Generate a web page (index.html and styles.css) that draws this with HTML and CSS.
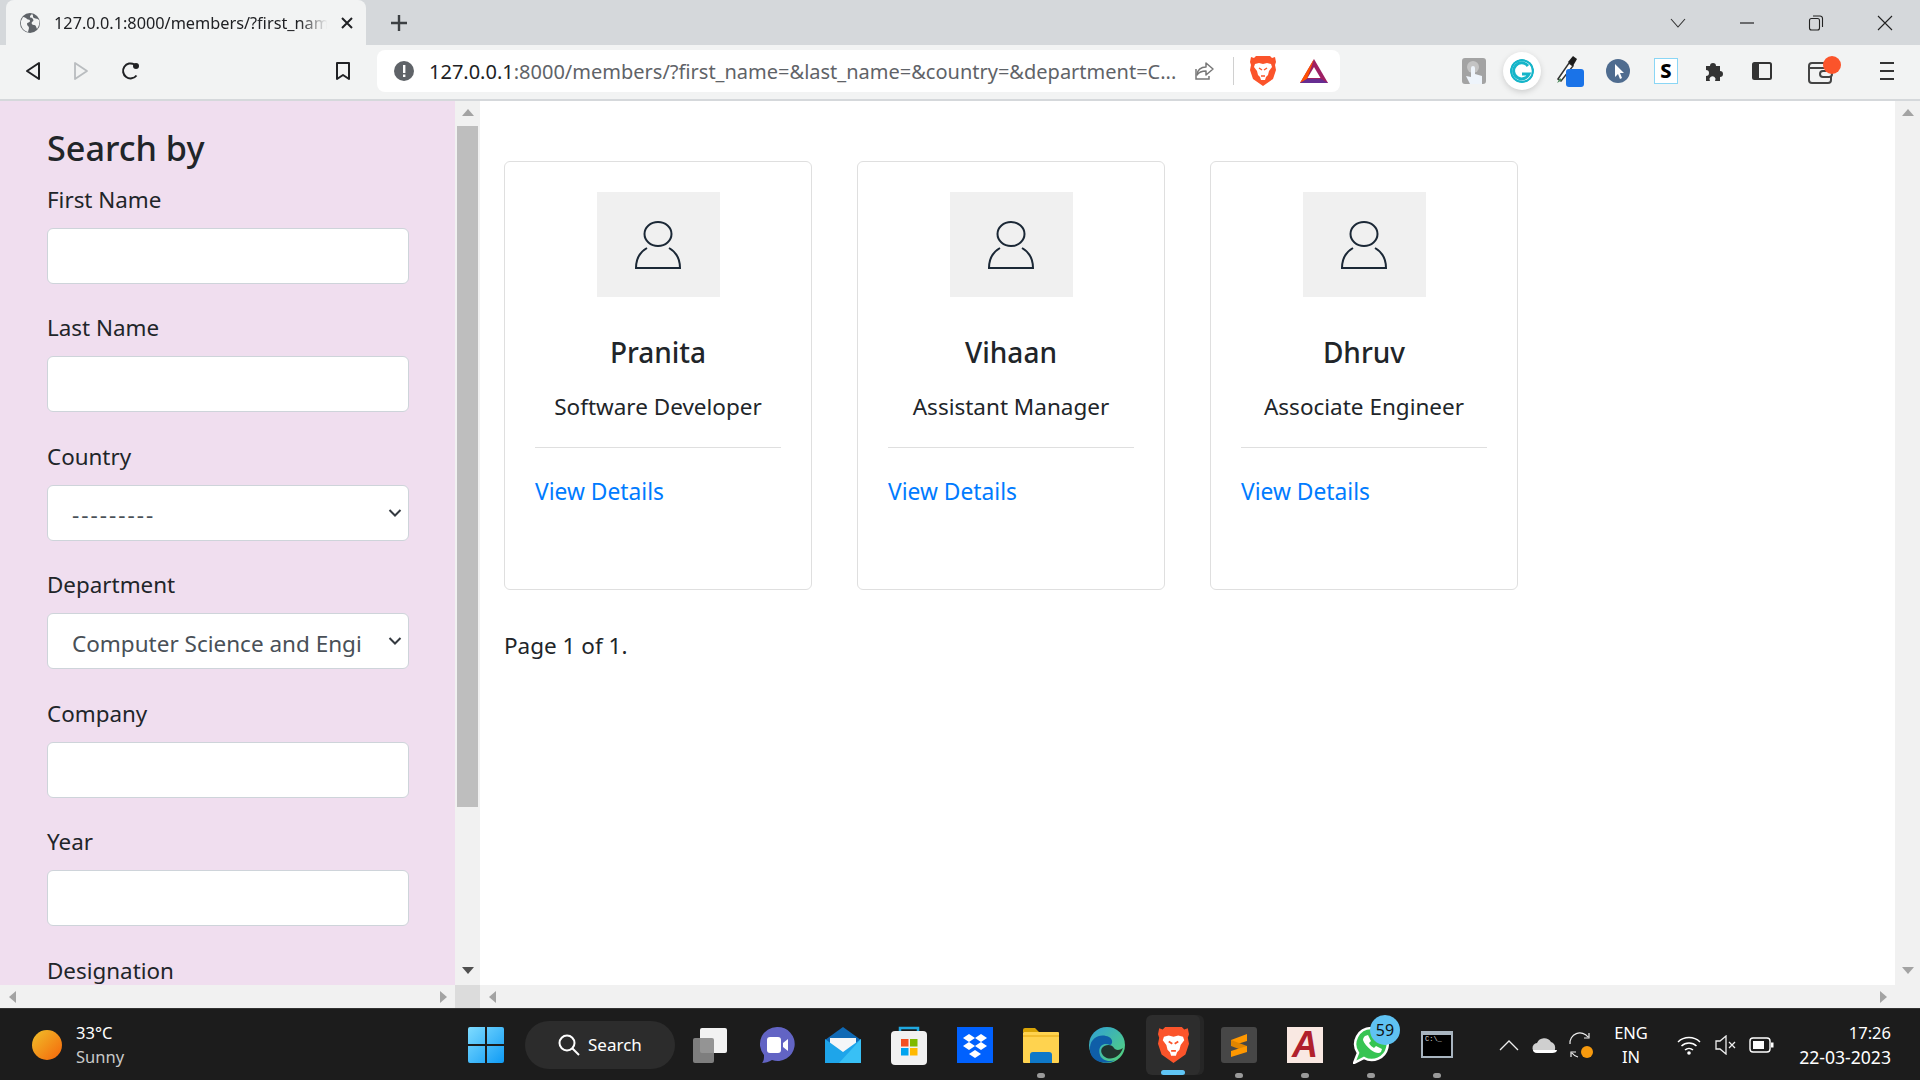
FILE: index.html
```html
<!DOCTYPE html>
<html lang="en">
<head>
    <meta charset="UTF-8">
    <title>Members</title>
    <link rel="stylesheet" href="styles.css">
</head>
<body>
<div class="screen">
    <!-- Tab strip -->
    <div class="tabstrip">
        <div class="tab">
            <svg class="tab-globe" width="22" height="22" viewBox="0 0 22 22"><circle cx="11" cy="11" r="10" fill="#5f6368"/><path d="M4 5c2 0 3 1 4 2s3 0 3 2-3 1-3 3 2 2 2 4l-1 4C5 19 1 15 2 9zM13 2c2 2 0 3 2 4s3 0 5 2c1 3 0 6-2 9-1-2-1-4-3-4s-3-2-2-3 2-1 1-3-3 0-3-3z" fill="#f2f3f3"/></svg>
            <span class="tab-title">127.0.0.1:8000/members/?first_nam</span>
            <svg class="tab-close" width="14" height="14" viewBox="0 0 14 14"><path d="M2 2l10 10M12 2L2 12" stroke="#202124" stroke-width="2"/></svg>
        </div>
        <svg class="new-tab" width="18" height="18" viewBox="0 0 18 18"><path d="M9 1v16M1 9h16" stroke="#3c4043" stroke-width="2.4"/></svg>
        <div class="window-btns">
            <svg width="16" height="16" viewBox="0 0 16 16"><path d="M1 4l7 8 7-8" fill="none" stroke="#333" stroke-width="1.1"/></svg>
            <svg width="16" height="16" viewBox="0 0 16 16"><path d="M1 8h14" stroke="#222" stroke-width="1.2"/></svg>
            <svg width="16" height="16" viewBox="0 0 16 16"><rect x="1.5" y="3.5" width="10" height="11.5" rx="2" fill="none" stroke="#222" stroke-width="1.1"/><path d="M5 1h7a2.500 2.500 0 0 1 2.500 2.500V12" fill="none" stroke="#222" stroke-width="1.1"/></svg>
            <svg width="16" height="16" viewBox="0 0 16 16"><path d="M1 1l14 14M15 1L1 15" stroke="#222" stroke-width="1.1"/></svg>
        </div>
    </div>

    <!-- Toolbar -->
    <div class="toolbar">
        <div class="nav-btns">
            <svg width="16" height="20" viewBox="0 0 16 20"><path d="M14 2v16L2 10z" fill="none" stroke="#202124" stroke-width="2" stroke-linejoin="round"/></svg>
            <svg width="16" height="20" viewBox="0 0 16 20"><path d="M2 2v16l12-8z" fill="none" stroke="#b9bcbf" stroke-width="1.800" stroke-linejoin="round"/></svg>
            <svg width="20" height="20" viewBox="0 0 20 20"><path d="M15.500 14.500A7.500 7.500 0 1 1 13.500 3.500" fill="none" stroke="#202124" stroke-width="2"/><circle cx="15" cy="5" r="3" fill="#202124"/></svg>
        </div>
        <svg class="bookmark" width="16" height="20" viewBox="0 0 16 20"><path d="M2 2h12v16l-6-4-6 4z" fill="none" stroke="#202124" stroke-width="2" stroke-linejoin="round"/></svg>
        <div class="omnibox">
            <svg width="20" height="20" viewBox="0 0 20 20"><circle cx="10" cy="10" r="10" fill="#5f6368"/><rect x="9" y="4" width="2.400" height="8" fill="#fff"/><rect x="9" y="13.500" width="2.400" height="2.500" fill="#fff"/></svg>
            <div class="url"><span class="url-host">127.0.0.1</span>:8000/members/?first_name=&amp;last_name=&amp;country=&amp;department=C...</div>
            <svg class="share" width="22" height="22" viewBox="0 0 22 22"><path d="M13 3l7 6-7 6v-4c-4 0-7 1-9 4 0-5 4-8 9-8z" fill="none" stroke="#777" stroke-width="1.500" stroke-linejoin="round"/><path d="M3 9v10h13v-3" fill="none" stroke="#777" stroke-width="1.500"/></svg>
            <div class="omni-sep"></div>
            <svg class="brave-small" width="26" height="30" viewBox="0 0 26 30"><use href="#brave"/></svg>
            <svg class="bat" width="28" height="24" viewBox="0 0 28 24"><path d="M14 0L0 24h28z" fill="#9e1f63"/><path d="M14 0L0 24l7-4z" fill="#ff5000"/><path d="M0 24h28l-7-4H7z" fill="#662d91"/><path d="M14 8l-6.500 11h13z" fill="#fff"/></svg>
        </div>
        <div class="extensions">
            <div class="ext ext-touch"><svg width="24" height="26" viewBox="0 0 24 26"><rect width="24" height="26" rx="3" fill="#a3a3a3"/><circle cx="11" cy="9" r="6" fill="#c4c4c4"/><path d="M9 10a2 2 0 0 1 4 0v6l7 2v8H8l-4-8 5 1z" fill="#eef4fb"/></svg></div>
            <div class="ext ext-g"><svg width="24" height="24" viewBox="0 0 24 24"><circle cx="12" cy="12" r="11" fill="none" stroke="#15b5c9" stroke-width="2.400"/><path d="M18 7a8 8 0 1 0 1 8h-7" fill="none" stroke="#15b5c9" stroke-width="3"/></svg></div>
            <div class="ext ext-drop"><svg width="30" height="34" viewBox="0 0 30 34"><path d="M3 25L14 9l4 3L6 27z" fill="#fff" stroke="#333" stroke-width="1.500"/><path d="M2 29l3-5 2 2z" fill="#4d8a5b"/><path d="M13 8l5-6 4 3-4 7z" fill="#1c1c1c"/><rect x="11" y="15" width="18" height="18" rx="3" fill="#1a73e8"/></svg></div>
            <div class="ext ext-cursor"><svg width="24" height="24" viewBox="0 0 24 24"><circle cx="12" cy="12" r="12" fill="#4f6c8f"/><path d="M9 5l9 9h-4l2 5-2 1-2-5-3 3z" fill="#fff"/></svg></div>
            <div class="ext ext-s"><span>S</span></div>
            <div class="ext"><svg width="22" height="22" viewBox="0 0 22 22"><path d="M3 6h4a3 3 0 1 1 6 0h4v5a3 3 0 1 1 0 6v4H12a3 3 0 1 0-5 0H3v-5a3 3 0 1 0 0-6z" fill="#333"/></svg></div>
            <div class="ext"><svg width="20" height="20" viewBox="0 0 20 20"><rect x="1" y="2" width="18" height="16" rx="1.500" fill="none" stroke="#333" stroke-width="2"/><rect x="1" y="2" width="6" height="16" fill="#333"/></svg></div>
            <div class="ext ext-wallet"><svg width="34" height="30" viewBox="0 0 34 30"><rect x="1" y="7" width="22" height="20" rx="3" fill="none" stroke="#444" stroke-width="2"/><path d="M1 12h22" stroke="#444" stroke-width="2"/><rect x="12" y="15" width="12" height="6" rx="3" fill="#f2f3f3" stroke="#444" stroke-width="2"/><circle cx="24" cy="9" r="9" fill="#fb542b"/></svg></div>
            <div class="ext ext-menu"><span></span><span></span><span></span></div>
        </div>
    </div>

    <div class="viewport">
        <!-- Search sidebar -->
        <aside class="side-frame">
            <div class="side-top">
                <div class="sidebar">
                    <h2>Search by</h2>
                    <div class="field"><label>First Name</label><input type="text"></div>
                    <div class="field"><label>Last Name</label><input type="text"></div>
                    <div class="field"><label>Country</label>
                        <div class="select-wrap"><select class="dashes"><option>---------</option></select><svg width="14" height="10" viewBox="0 0 14 10"><path d="M1.500 2L7 7.500 12.500 2" fill="none" stroke="#343a40" stroke-width="2"/></svg></div>
                    </div>
                    <div class="field"><label>Department</label>
                        <div class="select-wrap"><select><option>Computer Science and Engineering</option></select><svg width="14" height="10" viewBox="0 0 14 10"><path d="M1.500 2L7 7.500 12.500 2" fill="none" stroke="#343a40" stroke-width="2"/></svg></div>
                    </div>
                    <div class="field"><label>Company</label><input type="text"></div>
                    <div class="field"><label>Year</label><input type="text"></div>
                    <div class="field"><label>Designation</label></div>
                </div>
                <div class="vbar">
                    <svg width="12" height="7" viewBox="0 0 12 7"><path d="M6 0l6 7H0z" fill="#a3a3a3"/></svg>
                    <div class="vbar-thumb"></div>
                    <svg width="12" height="7" viewBox="0 0 12 7"><path d="M0 0h12L6 7z" fill="#505050"/></svg>
                </div>
            </div>
            <div class="hbar">
                <svg width="7" height="12" viewBox="0 0 7 12"><path d="M7 0v12L0 6z" fill="#a3a3a3"/></svg>
                <svg width="7" height="12" viewBox="0 0 7 12"><path d="M0 0v12l7-6z" fill="#a3a3a3"/></svg>
                <div class="hbar-corner"></div>
            </div>
        </aside>

        <!-- Member list -->
        <main class="main-frame">
            <div class="main-top">
                <div class="content">
                    <div class="cards">
                        <div class="card">
                            <div class="avatar"><svg width="48" height="50" viewBox="0 0 48 50"><use href="#person"/></svg></div>
                            <h3>Pranita</h3>
                            <p class="role">Software Developer</p>
                            <hr>
                            <a class="details" href="#">View Details</a>
                        </div>
                        <div class="card">
                            <div class="avatar"><svg width="48" height="50" viewBox="0 0 48 50"><use href="#person"/></svg></div>
                            <h3>Vihaan</h3>
                            <p class="role">Assistant Manager</p>
                            <hr>
                            <a class="details" href="#">View Details</a>
                        </div>
                        <div class="card">
                            <div class="avatar"><svg width="48" height="50" viewBox="0 0 48 50"><use href="#person"/></svg></div>
                            <h3>Dhruv</h3>
                            <p class="role">Associate Engineer</p>
                            <hr>
                            <a class="details" href="#">View Details</a>
                        </div>
                    </div>
                    <p class="pager">Page 1 of 1.</p>
                </div>
                <div class="vbar vbar-main">
                    <svg width="12" height="7" viewBox="0 0 12 7"><path d="M6 0l6 7H0z" fill="#a3a3a3"/></svg>
                    <svg width="12" height="7" viewBox="0 0 12 7"><path d="M0 0h12L6 7z" fill="#a3a3a3"/></svg>
                </div>
            </div>
            <div class="hbar hbar-main">
                <svg width="7" height="12" viewBox="0 0 7 12"><path d="M7 0v12L0 6z" fill="#a3a3a3"/></svg>
                <svg width="7" height="12" viewBox="0 0 7 12"><path d="M0 0v12l7-6z" fill="#a3a3a3"/></svg>
                <div class="hbar-corner hbar-blank"></div>
            </div>
        </main>
    </div>

    <!-- Windows taskbar -->
    <div class="taskbar">
        <div class="weather">
            <div class="sun"></div>
            <div class="weather-text"><div>33°C</div><div class="weather-sub">Sunny</div></div>
        </div>
        <svg class="winlogo" width="36" height="36" viewBox="0 0 36 36">
            <defs><linearGradient id="wg" x1="0" y1="0" x2="1" y2="1"><stop offset="0" stop-color="#7fdcff"/><stop offset="1" stop-color="#0f9bf5"/></linearGradient></defs>
            <path d="M2 0h15v17H0V2a2 2 0 0 1 2-2zM19 0h15a2 2 0 0 1 2 2v15H19zM0 19h17v17H2a2 2 0 0 1-2-2zM19 19h17v15a2 2 0 0 1-2 2H19z" fill="url(#wg)"/>
        </svg>
        <div class="searchpill">
            <svg width="24" height="24" viewBox="0 0 24 24"><circle cx="10" cy="10" r="7.500" fill="none" stroke="#fff" stroke-width="2"/><path d="M15.500 15.500L22 22" stroke="#fff" stroke-width="2"/></svg>
            <span>Search</span>
        </div>
        <div class="apps">
            <div class="app"><svg width="36" height="36" viewBox="0 0 36 36"><rect x="7" y="1" width="27" height="25" rx="2" fill="#f2f2f2"/><rect x="0" y="11" width="21" height="25" rx="2" fill="#8a8a8a" opacity=".9"/></svg></div>
            <div class="app"><svg width="36" height="38" viewBox="0 0 36 38"><path d="M18 1a17 17 0 1 1-5 33c-3 2-7 3-10 3 2-2 2-5 2-8A17 17 0 0 1 18 1z" fill="#6264c4"/><rect x="8" y="11" width="14" height="16" rx="3" fill="#fff"/><path d="M24 17l5-4v12l-5-4z" fill="#fff"/></svg></div>
            <div class="app"><svg width="36" height="36" viewBox="0 0 36 36"><path d="M0 13L18 0l18 13v3H0z" fill="#0f69b5"/><path d="M5 11h26v8l-13 9-13-9z" fill="#f4f6f8"/><path d="M0 12l18 13 18-13v24H0z" fill="#1ea5ea"/><path d="M36 12v24H14z" fill="#38c0f5"/></svg></div>
            <div class="app"><svg width="36" height="40" viewBox="0 0 36 40"><path d="M9 10V3h18v7" fill="none" stroke="#1fa8e0" stroke-width="2.500"/><rect y="6" width="36" height="34" rx="4" fill="#f1f1f1"/><rect x="10" y="14" width="7.500" height="7.500" fill="#f25022"/><rect x="19" y="14" width="7.500" height="7.500" fill="#7fba00"/><rect x="10" y="23" width="7.500" height="7.500" fill="#00a4ef"/><rect x="19" y="23" width="7.500" height="7.500" fill="#ffb900"/></svg></div>
            <div class="app"><svg width="36" height="36" viewBox="0 0 36 36"><rect width="36" height="36" fill="#0061fe"/><path d="M12 7l6 4-6 4-6-4zM24 7l6 4-6 4-6-4zM12 15l6 4-6 4-6-4zM24 15l6 4-6 4-6-4zM18 23l6 4-6 4-6-4z" fill="#fff"/></svg></div>
            <div class="app app-open"><svg width="36" height="36" viewBox="0 0 36 36"><path d="M0 3a2 2 0 0 1 2-2h10l4 4H0z" fill="#d9a406"/><rect y="5" width="36" height="31" rx="1" fill="#ffd34f"/><path d="M0 8h36v2H0z" fill="#f2bd2e"/><path d="M7 36v-8a3 3 0 0 1 3-3h16a3 3 0 0 1 3 3v8z" fill="#0e78c8"/></svg></div>
            <div class="app"><svg width="36" height="36" viewBox="0 0 36 36"><defs><linearGradient id="eg" x1="0" y1="0" x2="1" y2="1"><stop offset="0" stop-color="#2f9fd8"/><stop offset="1" stop-color="#56d676"/></linearGradient></defs><circle cx="18" cy="18" r="18" fill="url(#eg)"/><path d="M1 20C2 10 12 6 20 10c5 3 3 8 1 8-6-3-13 1-10 10 1 4 8 8 15 5-8 6-27 2-25-13z" fill="#0f5ea8"/><path d="M13 21c3-4 10-4 12 0 1 2 5 3 9 0-3 9-12 13-18 9-3-2-5-6-3-9z" fill="#1a1a1a" opacity=".85"/></svg></div>
            <div class="app app-active"><div class="active-bg"></div><svg width="31" height="36" viewBox="0 0 26 30"><use href="#brave"/></svg></div>
            <div class="app app-open"><svg width="36" height="36" viewBox="0 0 36 36"><rect width="36" height="36" rx="3" fill="#474747"/><path d="M26 7v7l-16 5v-6z" fill="#ff9800"/><path d="M10 13v6l16 6v-6z" fill="#e08500"/><path d="M26 19v6l-16 5v-6z" fill="#ff9800"/></svg></div>
            <div class="app app-open"><div class="acro">A</div></div>
            <div class="app app-open">
                <svg width="36" height="38" viewBox="0 0 36 38"><path d="M18 2a16 16 0 1 1-7 30L1 37l4-10A16 16 0 0 1 18 2z" fill="#36c452" stroke="#fff" stroke-width="2.500"/><path d="M12 10l3-1 3 6-2 2c1 2 3 4 5 5l2-2 6 3-1 3c-2 2-6 1-10-2s-7-7-8-10c0-2 1-3 2-4z" fill="#fff"/></svg>
                <span class="badge">59</span>
            </div>
            <div class="app app-open"><div class="cmd"><span>C:\_</span></div></div>
        </div>
        <div class="tray">
            <svg width="20" height="12" viewBox="0 0 20 12"><path d="M1 11l9-9 9 9" fill="none" stroke="#eee" stroke-width="1.300"/></svg>
            <svg class="tray-cloud" width="26" height="18" viewBox="0 0 26 18"><path d="M6 17a5 5 0 0 1-1-10 8 8 0 0 1 14-1 6 6 0 0 1 1 11z" fill="#cfcfcf"/><path d="M1 14h24c0 2-2 3-5 3H6c-3 0-5-1-5-3z" fill="#fff"/></svg>
            <svg class="tray-sync" width="26" height="28" viewBox="0 0 26 28"><path d="M2 13A10 10 0 0 1 20 6M16 7h5V2" fill="none" stroke="#eee" stroke-width="1.200"/><path d="M10 26a10 10 0 0 1-6-4M8 21H3v5" fill="none" stroke="#eee" stroke-width="1.200"/><circle cx="19" cy="21" r="6" fill="#f79a0e"/></svg>
            <div class="lang">ENG<br>IN</div>
            <svg class="tray-wifi" width="24" height="20" viewBox="0 0 24 20"><path d="M1 7a16 16 0 0 1 22 0M4.500 11a11 11 0 0 1 15 0M8 15a6 6 0 0 1 8 0" fill="none" stroke="#fff" stroke-width="1.500"/><circle cx="12" cy="18" r="1.800" fill="#fff"/></svg>
            <svg class="tray-sound" width="22" height="20" viewBox="0 0 22 20"><path d="M1 6h4l6-5v18l-6-5H1z" fill="none" stroke="#eee" stroke-width="1.300"/><path d="M14 7l6 6M20 7l-6 6" stroke="#eee" stroke-width="1.300"/></svg>
            <svg width="26" height="18" viewBox="0 0 26 18"><rect x="1" y="2" width="20" height="14" rx="3" fill="none" stroke="#fff" stroke-width="1.400"/><rect x="4" y="5" width="11" height="8" fill="#fff"/><rect x="22" y="6.500" width="2.500" height="5" fill="#fff"/></svg>
            <div class="clock"><div>17:26</div><div class="clock-date">22-03-2023</div></div>
        </div>
    </div>
</div>

<svg class="defs" width="0" height="0">
    <symbol id="person" viewBox="0 0 48 50">
        <ellipse cx="24" cy="14" rx="13.500" ry="12" fill="none" stroke="#1b2836" stroke-width="2"/>
        <path d="M13 28C6 32 2 38 2 48h44c0-10-4-16-11-20" fill="none" stroke="#1b2836" stroke-width="2"/>
    </symbol>
    <symbol id="brave" viewBox="0 0 26 30">
        <path d="M6 0h14l2 2 3-1 1 5-1 3 1 5-3 9-10 7-10-7-3-9 1-5-1-3 1-5 3 1z" fill="#fb542b"/>
        <path d="M5 8l4-1 4 1 4-1 4 1 1 3-3 4-1 4-2 2-1 3h-4l-1-3-2-2-1-4-3-4z" fill="#fff"/>
        <path d="M9 12l3 2M17 12l-3 2M11 20h4" stroke="#fb542b" stroke-width="1.500"/>
    </symbol>
</svg>
</body>
</html>
```

FILE: styles.css
```css
* {
    box-sizing: border-box;
}
html, body {
    margin: 0;
    padding: 0;
    height: 100%;
    overflow: hidden;
}
body {
    font-family: "Noto Sans", "Open Sans", sans-serif;
    color: #212529;
    background: #fff;
}
.screen {
    display: flex;
    flex-direction: column;
    height: 1080px;
}
.defs {
    position: absolute;
}

/* tab strip */
.tabstrip {
    height: 45px;
    display: flex;
    align-items: center;
    background: #d5d8db;
    padding-left: 6px;
    flex-shrink: 0;
}
.tab {
    width: 360px;
    height: 45px;
    background: #f2f3f3;
    border-radius: 8px 8px 0 0;
    display: flex;
    align-items: center;
    padding: 0 12px 0 13px;
}
.tab-globe {
    flex-shrink: 0;
}
.tab-title {
    margin-left: 13px;
    width: 280px;
    white-space: nowrap;
    font-size: 16.300px;
    color: #202124;
    -webkit-mask-image: linear-gradient(90deg, #000 88%, transparent 98%);
    mask-image: linear-gradient(90deg, #000 88%, transparent 98%);
}
.tab-close {
    margin-left: 7px;
    flex-shrink: 0;
}
.new-tab {
    margin-left: 24px;
}
.window-btns {
    margin-left: auto;
    display: flex;
    gap: 53px;
    padding-right: 27px;
}

/* toolbar */
.toolbar {
    height: 56px;
    background: #f2f3f3;
    border-bottom: 2px solid #d5d8db;
    display: flex;
    align-items: center;
    padding: 0 0 2px 25px;
    flex-shrink: 0;
}
.nav-btns {
    display: flex;
    align-items: center;
    gap: 32px;
}
.bookmark {
    margin-left: 194px;
}
.omnibox {
    margin-left: 26px;
    width: 963px;
    height: 42px;
    background: #fff;
    border-radius: 8px;
    display: flex;
    align-items: center;
    padding-left: 17px;
    flex-shrink: 0;
}
.url {
    margin-left: 15px;
    width: 745px;
    white-space: nowrap;
    font-size: 20px;
    color: #5f6368;
    padding-top: 1px;
}
.url-host {
    color: #202124;
}
.share {
    margin-left: 19px;
}
.omni-sep {
    width: 1px;
    height: 28px;
    background: #d0d0d0;
    margin-left: 18px;
}
.brave-small {
    margin-left: 16px;
}
.bat {
    margin-left: 24px;
}
.extensions {
    margin-left: 110px;
    display: flex;
    align-items: center;
}
.ext {
    width: 48px;
    height: 42px;
    display: flex;
    align-items: center;
    justify-content: center;
    flex-shrink: 0;
}
.ext-g svg {
    background: #fff;
    border-radius: 50%;
    box-shadow: 0 0 0 7px #fff, 0 2px 7px 6px rgba(0, 0, 0, 0.2);
}
.ext-s span {
    width: 24px;
    height: 26px;
    background: #fff;
    border: 1px solid #8ad6f5;
    color: #000;
    font-size: 20px;
    font-weight: 800;
    line-height: 24px;
    text-align: center;
}
.ext-wallet {
    width: 72px;
    margin-left: 3px;
}
.ext-menu {
    flex-direction: column;
    gap: 6px;
    margin-left: 9px;
    width: 34px;
}
.ext-menu span {
    width: 14px;
    height: 2px;
    background: #333;
}

/* page area */
.viewport {
    flex: 1;
    display: flex;
    min-height: 0;
}
.side-frame {
    width: 480px;
    display: flex;
    flex-direction: column;
    flex-shrink: 0;
}
.side-top, .main-top {
    flex: 1;
    display: flex;
    min-height: 0;
}
.sidebar {
    width: 455px;
    background: #f0deef;
    padding: 22px 46px 0 47px;
    overflow: hidden;
}
.sidebar h2 {
    margin: 0 0 11.500px;
    font-size: 34.200px;
    font-weight: 500;
    line-height: 50px;
}
.field {
    margin-bottom: 29.500px;
}
.field label {
    display: block;
    font-size: 22.400px;
    line-height: 30px;
    margin-bottom: 13px;
}
.field input, .field select {
    display: block;
    width: 362px;
    height: 56px;
    background: #fff;
    border: 1px solid #ced4da;
    border-radius: 6px;
    font-family: inherit;
    color: #495057;
}
.field select {
    appearance: none;
    -webkit-appearance: none;
    font-size: 22.500px;
    padding: 4px 46px 0 24px;
}
.field select.dashes {
    letter-spacing: 2px;
}
.select-wrap {
    position: relative;
}
.select-wrap svg {
    position: absolute;
    right: 7px;
    top: 23px;
}
.vbar {
    width: 25px;
    background: #f1f1f1;
    display: flex;
    flex-direction: column;
    align-items: center;
    padding: 8px 0 11px;
    justify-content: space-between;
}
.vbar-thumb {
    width: 21px;
    height: 681px;
    background: #bebebe;
    margin-top: 10px;
    margin-bottom: auto;
}
.hbar {
    height: 23px;
    background: #f1f1f1;
    display: flex;
    align-items: center;
    justify-content: space-between;
    padding-left: 9px;
    flex-shrink: 0;
}
.hbar svg:nth-child(2) {
    margin-left: auto;
    margin-right: 8px;
}
.hbar-corner {
    width: 25px;
    height: 23px;
    background: #dcdcdc;
}
.hbar-blank {
    background: #f1f1f1;
}
.main-frame {
    flex: 1;
    display: flex;
    flex-direction: column;
    min-width: 0;
}
.content {
    flex: 1;
    padding: 60px 0 0 24px;
}
.cards {
    display: flex;
    gap: 45px;
}
.card {
    width: 308px;
    height: 429px;
    border: 1px solid #dfdfdf;
    border-radius: 6px;
    padding: 30px 30px 0;
    text-align: center;
}
.avatar {
    width: 123px;
    height: 105px;
    background: #f0f0f0;
    margin: 0 auto;
    display: flex;
    align-items: center;
    justify-content: center;
}
.card h3 {
    margin: 35px 0 0;
    font-size: 28px;
    font-weight: 500;
    line-height: 40px;
}
.role {
    margin: 20px 0 0;
    font-size: 22.500px;
    line-height: 30px;
}
.card hr {
    border: 0;
    border-top: 1px solid #dfdfdf;
    margin: 25px 0 0;
}
.details {
    display: block;
    text-align: left;
    margin-top: 29px;
    color: #007bff;
    text-decoration: none;
    font-size: 22.800px;
    line-height: 30px;
}
.pager {
    margin: 41px 0 0;
    font-size: 22.500px;
    line-height: 30px;
}

/* taskbar */
.taskbar {
    height: 72px;
    background: #1c1c1c;
    border-top: 1px solid #333;
    display: flex;
    align-items: center;
    color: #fff;
    flex-shrink: 0;
}
.taskbar > * {
    flex-shrink: 0;
}
.weather {
    width: 468px;
    display: flex;
    align-items: center;
    padding-left: 32px;
    gap: 14px;
}
.sun {
    width: 30px;
    height: 30px;
    border-radius: 50%;
    background: linear-gradient(135deg, #f0c02a, #f5650a);
}
.weather-text {
    font-size: 16.500px;
    line-height: 24px;
}
.weather-sub {
    color: #c9c9c9;
}
.searchpill {
    margin-left: 21px;
    width: 150px;
    height: 48px;
    border-radius: 24px;
    background: #2c2c2c;
    display: flex;
    align-items: center;
    padding-left: 32px;
    gap: 7px;
    font-size: 17px;
}
.apps {
    margin-left: 3px;
    display: flex;
    align-items: center;
}
.app {
    width: 66px;
    height: 60px;
    display: flex;
    align-items: center;
    justify-content: center;
    position: relative;
}
.app svg {
    position: relative;
}
.app-open::after {
    content: "";
    position: absolute;
    bottom: -3px;
    left: 29px;
    width: 8px;
    height: 5px;
    border-radius: 3px;
    background: #9a9a9a;
}
.app-active::after {
    content: "";
    position: absolute;
    bottom: 0;
    left: 21px;
    width: 24px;
    height: 5px;
    border-radius: 3px;
    background: #60c5f5;
}
.active-bg {
    position: absolute;
    left: 6px;
    right: 6px;
    top: 0;
    bottom: 0;
    background: #2d2d2d;
    border-radius: 6px;
    box-shadow: 4px 0 0 #262626;
}
.acro {
    width: 36px;
    height: 36px;
    background: #f9e8e2;
    color: #b0202c;
    font-family: "Liberation Sans", sans-serif;
    font-style: italic;
    font-weight: 700;
    font-size: 36px;
    line-height: 36px;
    text-align: center;
}
.badge {
    position: absolute;
    left: 32px;
    top: 0;
    width: 30px;
    height: 30px;
    border-radius: 50%;
    background: #5fc2f2;
    color: #111;
    font-size: 16px;
    line-height: 30px;
    text-align: center;
}
.cmd {
    width: 32px;
    height: 27px;
    background: #000;
    border: 2px solid #a8b4bf;
    border-top-width: 4px;
    font-family: "Liberation Mono", monospace;
    font-size: 7px;
    line-height: 9px;
    color: #ddd;
    padding-left: 2px;
}
.tray {
    margin-left: 29px;
    display: flex;
    align-items: center;
}
.tray-cloud {
    margin-left: 13px;
}
.tray-sync {
    margin-left: 10px;
}
.lang {
    margin-left: 19px;
    width: 36px;
    text-align: center;
    font-size: 16.500px;
    line-height: 24px;
}
.tray-wifi {
    margin: 0 14px 0 28px;
}
.tray-sound {
    margin-right: 12px;
}
.clock {
    margin-left: 20px;
    text-align: right;
    font-size: 16.500px;
    line-height: 24px;
    width: 96px;
}
.clock-date {
    font-size: 17.600px;
    white-space: nowrap;
}
```
